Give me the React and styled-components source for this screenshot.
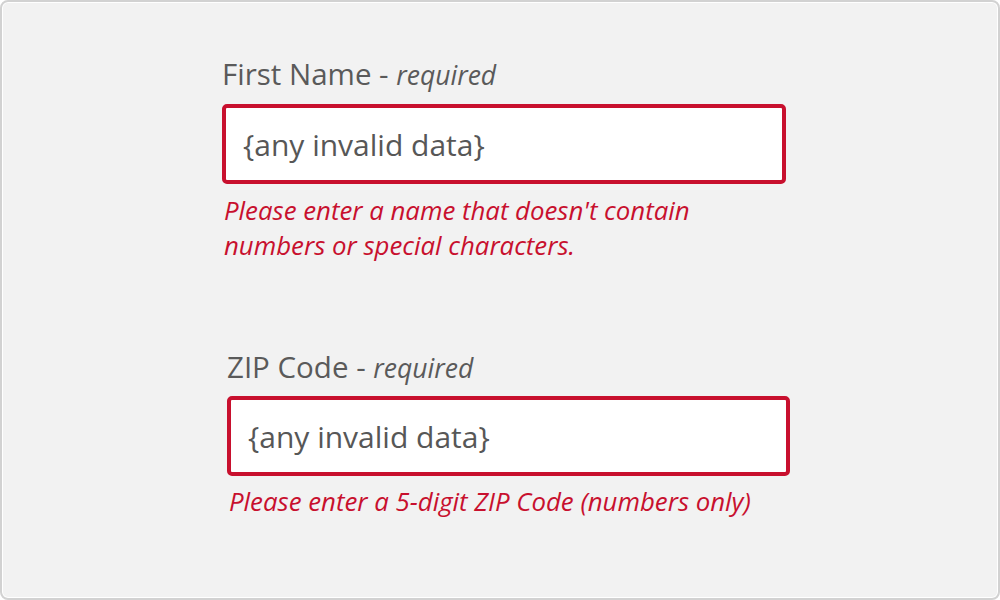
import React from "react"
import styled, {createGlobalStyle} from "styled-components"

// form validation example: two required fields, both in error state

const GlobalStyle = createGlobalStyle`
    html, body {
        margin: 0;
        padding: 0;
        background: #ffffff;
    }
    * {
        box-sizing: border-box;
    }
`

const Frame = styled.div`
    width: 1000px;
    height: 600px;
    background: #f2f2f2;
    border: 2px solid #d2d2d2;
    border-radius: 8px;
    box-shadow: inset 0 0 0 1px #ffffff;
    padding-top: 54px;
    font-family: "Open Sans", "Liberation Sans", sans-serif;
`

const Field = styled.div`
    width: ${p => p.width}px;
    margin-left: ${p => p.left}px;
    margin-top: ${p => p.top}px;
    display: flex;
    flex-direction: column;
`

const Label = styled.label`
    font-size: 29.5px;
    line-height: 36px;
    color: #5a5a5a;
    margin-bottom: ${p => p.gap}px;

    em {
        font-size: 26.5px;
        color: #5a5a5a;
    }
`

const Input = styled.input`
    height: 80px;
    width: 100%;
    border: 4px solid #c8102e;
    border-radius: 5px;
    background: #ffffff;
    padding: 0 0 0 17px;
    font-family: inherit;
    font-size: 30px;
    color: #575757;
    outline: none;
`

const Error = styled.p`
    margin: ${p => p.gap}px 0 0 2px;
    font-size: 25.8px;
    line-height: 35px;
    font-style: italic;
    color: #c8102e;
`

export default function App() {
    return (
        <>
            <GlobalStyle/>
            <Frame>
                <Field left={220} width={564} top={0}>
                    <Label gap={11}>First Name - <em>required</em></Label>
                    <Input defaultValue="{any invalid data}" readOnly/>
                    <Error gap={9}>
                        Please enter a name that doesn't contain<br/>
                        numbers or special characters.
                    </Error>
                </Field>
                <Field left={225} width={563} top={86}>
                    <Label gap={10}>ZIP Code - <em>required</em></Label>
                    <Input defaultValue="{any invalid data}" readOnly/>
                    <Error gap={8}>
                        Please enter a 5-digit ZIP Code (numbers only)
                    </Error>
                </Field>
            </Frame>
        </>
    )
}
